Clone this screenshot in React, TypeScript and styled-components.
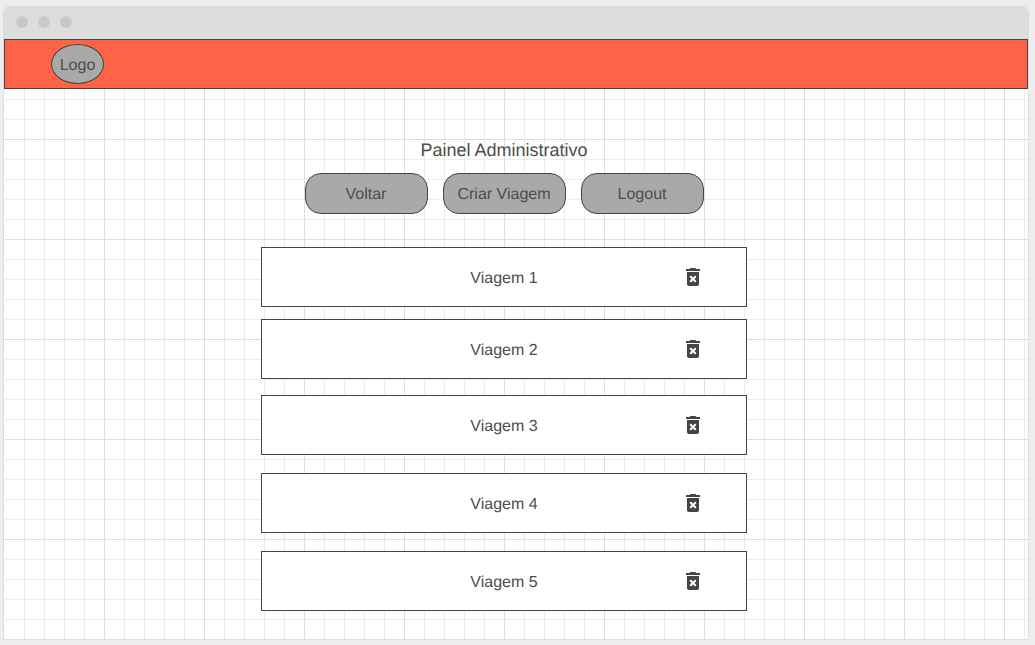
import React from "react";
import styled, { createGlobalStyle } from "styled-components";

const GlobalStyle = createGlobalStyle`
  *, *::before, *::after { box-sizing: border-box; }
  body {
    margin: 0;
    background: #ededed;
    color: #4d4d4d;
    font-family: "Liberation Sans", Arial, sans-serif;
    font-size: 16px;
    line-height: 20px;
    text-rendering: geometricPrecision;
  }
`;

const Page = styled.div`
  display: flex;
  min-height: 100vh;
  padding: 6px 6px 5px 3px;
`;

const BrowserWindow = styled.div`
  display: flex;
  flex: 1;
  flex-direction: column;
  border: 1px solid #dddddd;
  border-radius: 6px 6px 0 0;
  background: #ffffff;
`;

const TitleBar = styled.div`
  display: flex;
  align-items: center;
  gap: 10px;
  height: 32px;
  padding: 0 12px 2px;
  background: #dddddd;
  border-radius: 5px 5px 0 0;
`;

const Dot = styled.span`
  width: 12px;
  height: 12px;
  border-radius: 50%;
  background: #c9c9c9;
`;

const Header = styled.header`
  display: flex;
  align-items: center;
  height: 50px;
  padding: 0 46px;
  border: 1px solid #444444;
  background: #ff6347;
`;

const Logo = styled.a`
  display: flex;
  align-items: center;
  justify-content: center;
  width: 53px;
  height: 40px;
  padding-top: 4px;
  border: 1px solid #444444;
  border-radius: 50%;
  background: #a9a9a9;
  color: inherit;
  text-decoration: none;
`;

const Canvas = styled.main`
  display: flex;
  flex: 1;
  flex-direction: column;
  align-items: center;
  padding: 51px 25px 28px 0;
  border-left: 1px solid #ffffff;
  background-color: #ffffff;
  background-image:
    linear-gradient(to right, #dddddd 1px, transparent 1px),
    linear-gradient(to bottom, #dddddd 1px, transparent 1px),
    linear-gradient(to right, #ececec 1px, transparent 1px),
    linear-gradient(to bottom, #ececec 1px, transparent 1px);
  background-size: 100px 100px, 100px 100px, 20px 20px, 20px 20px;
  background-position: 99px 0, 0 50px, 19px 0, 0 10px;
`;

const Title = styled.h1`
  margin: 0 0 13px;
  font-size: 18px;
  font-weight: 400;
  line-height: 20px;
`;

const Actions = styled.div`
  display: flex;
  gap: 15px;
  margin-bottom: 33px;
`;

const ActionButton = styled.button`
  width: 123px;
  height: 41px;
  padding: 2px 0 0;
  border: 1px solid #444444;
  border-radius: 16px;
  background: #a9a9a9;
  color: inherit;
  font: inherit;
  text-rendering: inherit;
  cursor: pointer;
`;

const TripList = styled.ul`
  width: 100%;
  max-width: 486px;
  margin: 0;
  padding: 0;
  list-style: none;
`;

const TripRow = styled.li<{ $gap: number }>`
  display: grid;
  grid-template-columns: 1fr auto 1fr;
  align-items: center;
  height: 60px;
  margin-top: ${({ $gap }) => $gap}px;
  padding: 0 41px;
  border: 1px solid #444444;
  background: #ffffff;
`;

const TripName = styled.span`
  grid-column: 2;
  padding-top: 4px;
`;

const DeleteButton = styled.button`
  display: flex;
  justify-self: end;
  padding: 0;
  border: 0;
  background: none;
  color: #444444;
  cursor: pointer;
`;

const TrashIcon = () => (
  <svg width="24" height="24" viewBox="0 0 24 24" fill="currentColor" aria-hidden="true">
    <path d="M6 19c0 1.1.9 2 2 2h8c1.1 0 2-.9 2-2V7H6v12zm2.46-7.12l1.41-1.41L12 12.59l2.12-2.12 1.41 1.41L13.41 14l2.12 2.12-1.41 1.41L12 15.41l-2.12 2.12-1.41-1.41L10.59 14l-2.13-2.12zM15.5 4l-1-1h-5l-1 1H5v2h14V4z" />
  </svg>
);

const actions = ["Voltar", "Criar Viagem", "Logout"];

const trips = [
  { name: "Viagem 1", gap: 0 },
  { name: "Viagem 2", gap: 12 },
  { name: "Viagem 3", gap: 16 },
  { name: "Viagem 4", gap: 18 },
  { name: "Viagem 5", gap: 18 },
];

export default function App() {
  return (
    <Page>
      <GlobalStyle />
      <BrowserWindow>
        <TitleBar>
          <Dot />
          <Dot />
          <Dot />
        </TitleBar>
        <Header>
          <Logo href="#">Logo</Logo>
        </Header>
        <Canvas>
          <Title>Painel Administrativo</Title>
          <Actions>
            {actions.map((label) => (
              <ActionButton key={label} type="button">
                {label}
              </ActionButton>
            ))}
          </Actions>
          <TripList>
            {trips.map(({ name, gap }) => (
              <TripRow key={name} $gap={gap}>
                <TripName>{name}</TripName>
                <DeleteButton type="button" aria-label={`Excluir ${name}`}>
                  <TrashIcon />
                </DeleteButton>
              </TripRow>
            ))}
          </TripList>
        </Canvas>
      </BrowserWindow>
    </Page>
  );
}
